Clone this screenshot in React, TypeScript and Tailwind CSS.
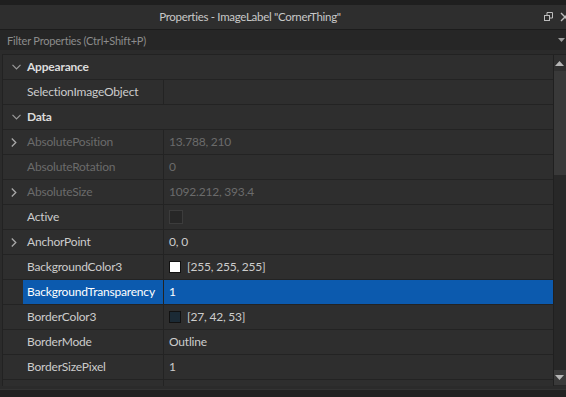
import React from "react";

type Row =
  | { kind: "header"; label: string }
  | {
      kind: "prop";
      label: string;
      value?: string;
      expand?: boolean;
      disabled?: boolean;
      selected?: boolean;
      swatch?: string;
      checkbox?: boolean;
    };

const rows: Row[] = [
  { kind: "header", label: "Appearance" },
  { kind: "prop", label: "SelectionImageObject" },
  { kind: "header", label: "Data" },
  { kind: "prop", label: "AbsolutePosition", value: "13.788, 210", expand: true, disabled: true },
  { kind: "prop", label: "AbsoluteRotation", value: "0", disabled: true },
  { kind: "prop", label: "AbsoluteSize", value: "1092.212, 393.4", expand: true, disabled: true },
  { kind: "prop", label: "Active", checkbox: true },
  { kind: "prop", label: "AnchorPoint", value: "0, 0", expand: true },
  { kind: "prop", label: "BackgroundColor3", value: "[255, 255, 255]", swatch: "#ffffff" },
  { kind: "prop", label: "BackgroundTransparency", value: "1", selected: true },
  { kind: "prop", label: "BorderColor3", value: "[27, 42, 53]", swatch: "#1b2a35" },
  { kind: "prop", label: "BorderMode", value: "Outline" },
  { kind: "prop", label: "BorderSizePixel", value: "1" },
  { kind: "prop", label: "" },
];

function ChevronDown() {
  return (
    <svg width="9" height="6" viewBox="0 0 9 6" className="text-[#9a9a9a]">
      <path d="M0.5 0.8 L4.5 4.8 L8.5 0.8" fill="none" stroke="currentColor" strokeWidth="1.2" />
    </svg>
  );
}

function ChevronRight() {
  return (
    <svg width="6" height="9" viewBox="0 0 6 9" className="text-[#a8a8a8]">
      <path d="M0.8 0.5 L4.8 4.5 L0.8 8.5" fill="none" stroke="currentColor" strokeWidth="1.3" />
    </svg>
  );
}

function PropRow({ row }: { row: Row }) {
  if (row.kind === "header") {
    return (
      <div className="flex h-[25px] items-center border-b border-[#232323]">
        <div className="flex w-[24px] justify-center pl-[2px]">
          <ChevronDown />
        </div>
        <span className="font-bold text-[#dcdcdc]">{row.label}</span>
      </div>
    );
  }
  const text = row.disabled ? "text-[#6b6b6b]" : "text-[#cccccc]";
  return (
    <div className="flex h-[25px] border-b border-[#232323]">
      <div className="flex w-[20px] items-center justify-center pl-[2px]">
        {row.expand && <ChevronRight />}
      </div>
      <div className={`flex flex-1 ${row.selected ? "bg-[#0c5aae]" : ""}`}>
        <div
          className={`flex w-[141px] items-center overflow-hidden whitespace-nowrap border-r border-[#232323] pl-[4px] ${row.selected ? "text-white" : text}`}
        >
          {row.label}
        </div>
        <div className={`flex flex-1 items-center gap-[6px] pl-[5px] ${row.selected ? "text-white" : text}`}>
          {row.checkbox && (
            <span className="h-[14px] w-[14px] border border-[#3c3c3c] bg-[#272727]" />
          )}
          {row.swatch && (
            <span
              className="h-[12px] w-[12px] border border-[#111]"
              style={{ background: row.swatch }}
            />
          )}
          {row.value && <span>{row.value}</span>}
        </div>
      </div>
    </div>
  );
}

export default function App() {
  return (
    <div
      className="flex h-[397px] w-[566px] flex-col overflow-hidden bg-[#2b2b2b] text-[12px] leading-none tracking-[-0.2px]"
      style={{ fontFamily: "Lato, 'Noto Sans', sans-serif" }}
    >
      <div className="h-[5px] bg-[#1f1f1f]" />
      <div className="relative flex h-[24px] items-center bg-[#2e2e2e]">
        <div className="w-[500px] text-center text-[11.5px] tracking-[-0.3px] text-[#c8c8c8]">
          Properties - ImageLabel "CornerThing"
        </div>
        <div className="absolute right-[-4px] top-[7px] flex items-center gap-[7px] text-[#bdbdbd]">
          <svg width="9" height="10" viewBox="0 0 9 10">
            <rect x="0.5" y="3.5" width="5" height="5" fill="none" stroke="currentColor" />
            <path d="M3 3.5 V0.5 H8.5 V6 H5.5" fill="none" stroke="currentColor" />
          </svg>
          <svg width="10" height="10" viewBox="0 0 10 10">
            <path d="M1 1 L9 9 M9 1 L1 9" stroke="currentColor" strokeWidth="1.4" />
          </svg>
        </div>
      </div>
      <div className="flex h-[21px] items-center justify-between border-t border-[#1c1c1c] bg-[#262626] pl-[7px] pr-[1px] text-[11px] text-[#8c8c8c]">
        <span>Filter Properties (Ctrl+Shift+P)</span>
        <svg width="7" height="4" viewBox="0 0 7 4">
          <path d="M0 0 H7 L3.5 4 Z" fill="#9a9a9a" />
        </svg>
      </div>
      <div className="h-[4px] bg-[#2b2b2b]" />
      <div className="ml-[2px] flex h-[332px] border-l border-t border-[#222] bg-[#2e2e2e]">
        <div className="flex-1 overflow-hidden border-r border-[#202020]">
          {rows.map((r, i) => (
            <PropRow key={i} row={r} />
          ))}
        </div>
        <div className="flex w-[12px] flex-col bg-[#282828]">
          <div className="flex h-[16px] items-center justify-center bg-[#2f2f2f] pr-[1px]">
            <svg width="9" height="5" viewBox="0 0 9 5">
              <path d="M0 5 L4.5 0 L9 5 Z" fill="#b5b5b5" />
            </svg>
          </div>
          <div className="h-[104px] bg-[#393939]" />
          <div className="flex-1" />
          <div className="mb-[1px] flex h-[15px] items-center justify-center bg-[#3a3a3a] pr-[1px]">
            <svg width="9" height="5" viewBox="0 0 9 5">
              <path d="M0 0 L4.5 5 L9 0 Z" fill="#b5b5b5" />
            </svg>
          </div>
        </div>
      </div>
      <div className="h-[3px] bg-[#2b2b2b]" />
      <div className="flex-1 border-t border-[#333] bg-[#222]" />
    </div>
  );
}
